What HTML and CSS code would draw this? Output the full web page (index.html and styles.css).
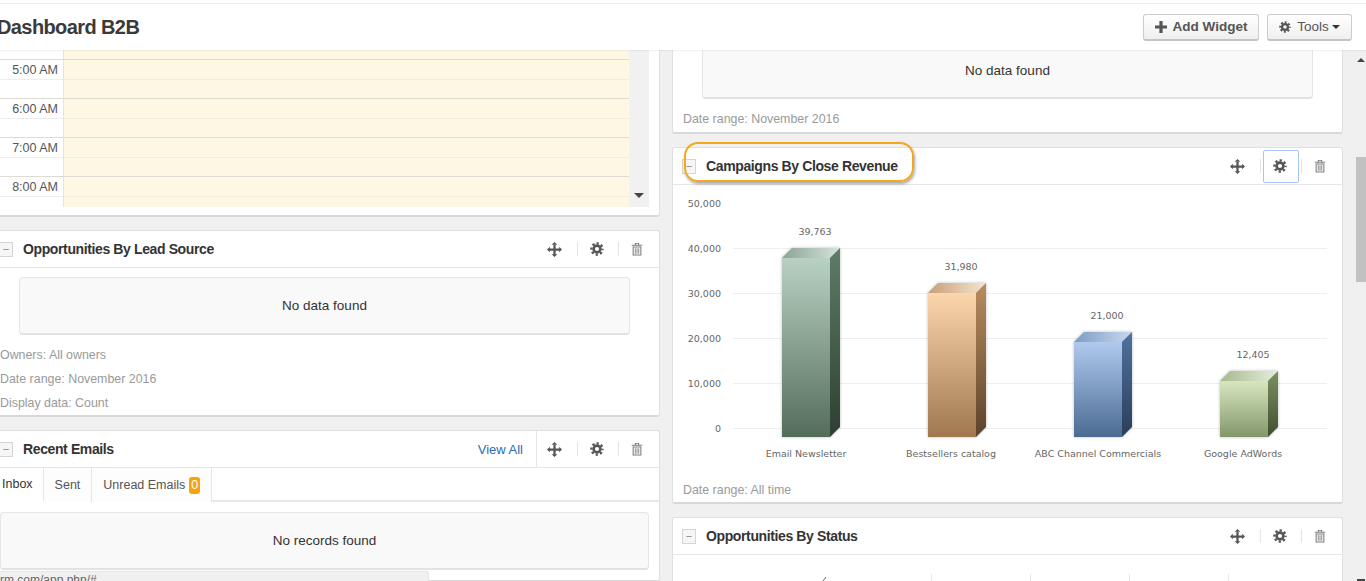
FILE: index.html
```html
<!DOCTYPE html>
<html lang="en">
<head>
    <meta charset="UTF-8">
    <meta name="viewport" content="width=device-width, initial-scale=1.0">
    <title>Dashboard B2B</title>
    <link rel="stylesheet" href="styles.css">
</head>
<body>

    <!-- shared icons -->
    <svg class="icon-sprite" xmlns="http://www.w3.org/2000/svg">
        <symbol id="i-move" viewBox="0 0 16 16">
            <path d="M6.8 3h2.4v3.8H13V5l3 3-3 3V9.2H9.2V13H11l-3 3-3-3h1.8V9.2H3V11L0 8l3-3v1.8h3.8z"/>
            <path d="M8 0l3 3H5z"/>
        </symbol>
        <symbol id="i-gear" viewBox="0 0 16 16">
            <circle cx="8" cy="8" r="3.9" fill="none" stroke="currentColor" stroke-width="3"/>
            <circle cx="8" cy="8" r="6.4" fill="none" stroke="currentColor" stroke-width="2.6" stroke-dasharray="2.6 2.43" stroke-dashoffset="1.3"/>
        </symbol>
        <symbol id="i-trash" viewBox="0 0 16 16">
            <path d="M2 3h12v1.3H2zM5.5 3V1h5v2h-1.2V2.1H6.7V3z"/>
            <path d="M3 5h10v10.5H3zm1.2 1.2v8.1h7.6V6.2z"/>
            <path d="M5.5 7h1v6.5h-1zM7.5 7h1v6.5h-1zM9.5 7h1v6.5h-1z"/>
        </symbol>
        <symbol id="i-plus" viewBox="0 0 12 12">
            <path d="M4.4 0h3.2v4.4H12v3.2H7.6V12H4.4V7.6H0V4.4h4.4z"/>
        </symbol>
    </svg>

    <header class="topbar">
        <h1 class="page-title">Dashboard B2B</h1>
        <div class="topbar-actions">
            <button class="btn btn-add"><svg class="btn-icon"><use href="#i-plus"/></svg>Add Widget</button>
            <button class="btn btn-tools"><svg class="btn-icon"><use href="#i-gear"/></svg>Tools<span class="caret"></span></button>
        </div>
    </header>

    <main class="board">
        <div class="column">
            <!-- calendar widget, scrolled under the top bar -->
            <section class="panel panel-calendar">
                <div class="calendar">
                    <div class="cal-rows">
                        <div class="cal-row cal-row-head"><div class="cal-time"></div><div class="cal-slot"></div></div>
                        <div class="cal-row"><div class="cal-time">5:00 AM</div><div class="cal-slot"></div></div>
                        <div class="cal-row"><div class="cal-time">6:00 AM</div><div class="cal-slot"></div></div>
                        <div class="cal-row"><div class="cal-time">7:00 AM</div><div class="cal-slot"></div></div>
                        <div class="cal-row cal-row-last"><div class="cal-time">8:00 AM</div><div class="cal-slot"></div></div>
                    </div>
                    <div class="cal-scroll"><span class="arrow-down"></span></div>
                </div>
            </section>

            <section class="panel">
                <div class="panel-head">
                    <span class="collapse">&minus;</span>
                    <h3 class="panel-title">Opportunities By Lead Source</h3>
                    <div class="actions">
                        <span class="action action-move"><svg class="icon"><use href="#i-move"/></svg></span>
                        <i class="sep"></i>
                        <span class="action action-gear"><svg class="icon icon-small"><use href="#i-gear"/></svg></span>
                        <i class="sep"></i>
                        <span class="action action-trash"><svg class="icon icon-small"><use href="#i-trash"/></svg></span>
                    </div>
                </div>
                <div class="empty empty-wide empty-lead">No data found</div>
                <div class="meta meta-lead">
                    <p>Owners: All owners</p>
                    <p>Date range: November 2016</p>
                    <p>Display data: Count</p>
                </div>
            </section>

            <section class="panel panel-emails">
                <div class="panel-head">
                    <span class="collapse">&minus;</span>
                    <h3 class="panel-title">Recent Emails</h3>
                    <div class="actions">
                        <a class="view-all" href="#">View All</a>
                        <i class="sep sep-tall"></i>
                        <span class="action action-move"><svg class="icon"><use href="#i-move"/></svg></span>
                        <i class="sep"></i>
                        <span class="action action-gear"><svg class="icon icon-small"><use href="#i-gear"/></svg></span>
                        <i class="sep"></i>
                        <span class="action action-trash"><svg class="icon icon-small"><use href="#i-trash"/></svg></span>
                    </div>
                </div>
                <div class="tabs">
                    <span class="tab tab-active">Inbox</span>
                    <span class="tab">Sent</span>
                    <span class="tab tab-unread">Unread Emails<span class="badge">0</span></span>
                </div>
                <div class="empty empty-records">No records found</div>
            </section>
        </div>

        <div class="column">
            <section class="panel panel-clipped">
                <div class="empty empty-wide empty-top">No data found</div>
                <div class="meta"><p>Date range: November 2016</p></div>
            </section>

            <section class="panel">
                <div class="highlight"></div>
                <div class="panel-head">
                    <span class="collapse">&minus;</span>
                    <h3 class="panel-title">Campaigns By Close Revenue</h3>
                    <div class="actions">
                        <span class="action action-move"><svg class="icon"><use href="#i-move"/></svg></span>
                        <i class="sep"></i>
                        <span class="action action-gear action-focus"><svg class="icon icon-small"><use href="#i-gear"/></svg></span>
                        <i class="sep"></i>
                        <span class="action action-trash"><svg class="icon icon-small"><use href="#i-trash"/></svg></span>
                    </div>
                </div>

                <svg class="chart" viewBox="673 185 668 293" xmlns="http://www.w3.org/2000/svg">
                    <defs>
                        <linearGradient id="g-front" x1="0" y1="0" x2="0" y2="1"><stop offset="0" stop-color="#b9d1c2"/><stop offset="1" stop-color="#546d5b"/></linearGradient>
                        <linearGradient id="g-side" x1="0" y1="0" x2="0" y2="1"><stop offset="0" stop-color="#5e7c68"/><stop offset="1" stop-color="#2d3f32"/></linearGradient>
                        <linearGradient id="g-top" x1="0" y1="0" x2="1" y2="0"><stop offset="0" stop-color="#8aa595"/><stop offset="1" stop-color="#d6e2dc"/></linearGradient>
                        <linearGradient id="o-front" x1="0" y1="0" x2="0" y2="1"><stop offset="0" stop-color="#fcd6ac"/><stop offset="1" stop-color="#a07850"/></linearGradient>
                        <linearGradient id="o-side" x1="0" y1="0" x2="0" y2="1"><stop offset="0" stop-color="#b88c5e"/><stop offset="1" stop-color="#5c422b"/></linearGradient>
                        <linearGradient id="o-top" x1="0" y1="0" x2="1" y2="0"><stop offset="0" stop-color="#c89e76"/><stop offset="1" stop-color="#f7e4d2"/></linearGradient>
                        <linearGradient id="b-front" x1="0" y1="0" x2="0" y2="1"><stop offset="0" stop-color="#b0caee"/><stop offset="1" stop-color="#4b6b93"/></linearGradient>
                        <linearGradient id="b-side" x1="0" y1="0" x2="0" y2="1"><stop offset="0" stop-color="#4f72a0"/><stop offset="1" stop-color="#293e5a"/></linearGradient>
                        <linearGradient id="b-top" x1="0" y1="0" x2="1" y2="0"><stop offset="0" stop-color="#7d9cc6"/><stop offset="1" stop-color="#c8d8ec"/></linearGradient>
                        <linearGradient id="l-front" x1="0" y1="0" x2="0" y2="1"><stop offset="0" stop-color="#d8e6bf"/><stop offset="1" stop-color="#83976b"/></linearGradient>
                        <linearGradient id="l-side" x1="0" y1="0" x2="0" y2="1"><stop offset="0" stop-color="#7c9262"/><stop offset="1" stop-color="#404e2f"/></linearGradient>
                        <linearGradient id="l-top" x1="0" y1="0" x2="1" y2="0"><stop offset="0" stop-color="#a5b88d"/><stop offset="1" stop-color="#e5eed9"/></linearGradient>
                    </defs>

                    <g class="grid">
                        <path d="M733 248.5H1327M733 293.5H1327M733 338.5H1327M733 383.5H1327M733 428.5H1327"/>
                    </g>

                    <g class="axis-y">
                        <text x="721" y="207">50,000</text>
                        <text x="721" y="252">40,000</text>
                        <text x="721" y="297">30,000</text>
                        <text x="721" y="342">20,000</text>
                        <text x="721" y="387">10,000</text>
                        <text x="721" y="432">0</text>
                    </g>

                    <g class="bar">
                        <polygon fill="url(#g-top)" points="782,258 792,248 840,248 830,258"/>
                        <polygon fill="url(#g-side)" points="830,258 840,248 840,427 830,437"/>
                        <rect fill="url(#g-front)" x="782" y="258" width="48" height="179"/>
                    </g>
                    <g class="bar">
                        <polygon fill="url(#o-top)" points="928,293 938,283 986,283 976,293"/>
                        <polygon fill="url(#o-side)" points="976,293 986,283 986,427 976,437"/>
                        <rect fill="url(#o-front)" x="928" y="293" width="48" height="144"/>
                    </g>
                    <g class="bar">
                        <polygon fill="url(#b-top)" points="1074,342 1084,332 1132,332 1122,342"/>
                        <polygon fill="url(#b-side)" points="1122,342 1132,332 1132,427 1122,437"/>
                        <rect fill="url(#b-front)" x="1074" y="342" width="48" height="95"/>
                    </g>
                    <g class="bar">
                        <polygon fill="url(#l-top)" points="1220,381 1230,371 1278,371 1268,381"/>
                        <polygon fill="url(#l-side)" points="1268,381 1278,371 1278,427 1268,437"/>
                        <rect fill="url(#l-front)" x="1220" y="381" width="48" height="56"/>
                    </g>

                    <g class="values">
                        <text x="815" y="235">39,763</text>
                        <text x="961" y="270">31,980</text>
                        <text x="1107" y="319">21,000</text>
                        <text x="1253" y="358">12,405</text>
                    </g>
                    <g class="axis-x">
                        <text x="806" y="457">Email Newsletter</text>
                        <text x="951" y="457">Bestsellers catalog</text>
                        <text x="1098" y="457">ABC Channel Commercials</text>
                        <text x="1243" y="457">Google AdWords</text>
                    </g>
                </svg>

                <div class="meta meta-chart"><p>Date range: All time</p></div>
            </section>

            <section class="panel panel-status">
                <div class="panel-head">
                    <span class="collapse">&minus;</span>
                    <h3 class="panel-title">Opportunities By Status</h3>
                    <div class="actions">
                        <span class="action action-move"><svg class="icon"><use href="#i-move"/></svg></span>
                        <i class="sep"></i>
                        <span class="action action-gear"><svg class="icon icon-small"><use href="#i-gear"/></svg></span>
                        <i class="sep"></i>
                        <span class="action action-trash"><svg class="icon icon-small"><use href="#i-trash"/></svg></span>
                    </div>
                </div>
                <svg class="chart-stub" viewBox="673 555 668 30" xmlns="http://www.w3.org/2000/svg">
                    <path class="stub-grid" d="M931.5 574V585M1030.5 574V585M1129.5 574V585M1228.5 574V585"/>
                    <path class="stub-tick" d="M823 581L826 577"/>
                </svg>
            </section>
        </div>

        <aside class="page-scroll">
            <span class="arrow-up"></span>
            <div class="page-thumb"></div>
            <span class="arrow-bottom"></span>
        </aside>
    </main>

    <div class="status-link">rm.com/app.php/#</div>

</body>
</html>
```

FILE: styles.css
```css
/* Page frame */
* {
    box-sizing: border-box;
}

html, body {
    height: 100%;
}

body {
    font-family: "Liberation Sans", Arial, sans-serif;
    font-size: 12.5px;
    color: #333;
    background-color: #f0f0f0;
    margin: 0;
    overflow: hidden;
    position: relative;
}

p, h1, h3 {
    margin: 0;
}

.icon-sprite {
    display: none;
}

/* Top bar */
.topbar {
    display: flex;
    align-items: center;
    justify-content: space-between;
    height: 50px;
    padding: 4px 14px 0 0;
    background: linear-gradient(#eee, #eee) 0 3px / 100% 1px no-repeat #fff;
    box-shadow: 0 1px 1px rgba(0, 0, 0, 0.05);
    position: relative;
    z-index: 2;
}

.page-title {
    font-size: 20px;
    font-weight: bold;
    letter-spacing: -0.6px;
    color: #3a3a3a;
    margin-left: -3px;
}

.topbar-actions {
    display: flex;
    gap: 8px;
}

.btn {
    display: flex;
    align-items: center;
    justify-content: center;
    height: 27px;
    font-family: inherit;
    color: #555;
    background: linear-gradient(#fff, #efefef);
    border: 1px solid #ccc;
    border-bottom: 2px solid #c4c4c4;
    border-radius: 3px;
    padding: 0;
}

.btn-add {
    width: 116px;
    font-size: 13.5px;
    font-weight: bold;
}

.btn-tools {
    width: 85px;
    font-size: 13.5px;
}

.btn-icon {
    width: 12px;
    height: 12px;
    fill: #555;
    color: #555;
    margin-right: 6px;
}

.caret {
    width: 0;
    height: 0;
    border-left: 4px solid transparent;
    border-right: 4px solid transparent;
    border-top: 4px solid #333;
    margin-left: 3px;
}

/* Columns */
.board {
    display: flex;
    gap: 12px;
    height: 531px;
    margin-left: -11px;
    overflow: hidden;
}

.column {
    display: flex;
    flex-direction: column;
    gap: 13px;
    flex: 0 0 671px;
}

/* Widgets */
.panel {
    flex: none;
    position: relative;
    background-color: #fff;
    border: 1px solid #e0e0e0;
    border-bottom: 2px solid #d8d8d8;
    border-radius: 3px;
}

.panel-calendar,
.panel-clipped {
    border-top: none;
    border-radius: 0 0 3px 3px;
}

.panel-calendar {
    padding: 0 10px 8px;
}

.panel-head {
    display: flex;
    align-items: center;
    height: 37px;
    padding-left: 9px;
    border-bottom: 1px solid #e6e6e6;
}

.collapse {
    flex: none;
    width: 14px;
    height: 15px;
    line-height: 12px;
    text-align: center;
    font-size: 11px;
    color: #888;
    background-color: #f6f6f6;
    border: 1px solid #d5d5d5;
    margin-right: 10px;
}

.panel-title {
    font-size: 14px;
    font-weight: bold;
    letter-spacing: -0.38px;
    color: #333;
}

.actions {
    display: flex;
    align-items: center;
    margin-left: auto;
    height: 100%;
}

.action {
    display: flex;
    align-items: center;
    justify-content: center;
    width: 40px;
    height: 33px;
    color: #555;
    fill: #555;
}

.action-move {
    padding-right: 5px;
}

.action-gear {
    padding-right: 2px;
}

.action-trash {
    padding-right: 4px;
    color: #7c7c7c;
    fill: #7c7c7c;
}

/* the gear that has keyboard focus */
.action-focus {
    width: 36px;
    margin: 0 2px;
    border: 1px solid #a3c6f2;
    border-radius: 2px;
}

.icon {
    width: 15px;
    height: 15px;
}

.icon-small {
    width: 14px;
    height: 14px;
}

.sep {
    width: 1px;
    height: 14px;
    background-color: #e4e4e4;
}

.sep-tall {
    height: 100%;
}

.view-all {
    font-size: 13px;
    color: #2a6db5;
    text-decoration: none;
    margin-right: 13px;
}

/* Empty boxes */
.empty {
    display: flex;
    align-items: center;
    justify-content: center;
    height: 58px;
    font-size: 13.5px;
    color: #333;
    background-color: #f9f9f9;
    border: 1px solid #e6e6e6;
    border-bottom: 2px solid #e2e2e2;
    border-radius: 4px;
}

.empty-wide {
    margin: 0 29px;
}

.empty-lead {
    margin-top: 9px;
}

.empty-top {
    height: 49px;
    padding-bottom: 7px;
    border-top: none;
    border-radius: 0 0 4px 4px;
}

.empty-records {
    margin: 10px 10px 10px;
}

/* Footnotes under a widget */
.meta {
    font-size: 12.4px;
    line-height: 24px;
    color: #9a9a9a;
    padding: 8px 10px 1px;
}

.meta-lead {
    padding: 8px 10px 0;
}

.meta-chart {
    padding: 0 10px;
}

/* Calendar */
.calendar {
    display: flex;
    height: 157px;
    overflow: hidden;
}

.cal-rows {
    flex: 1;
}

.cal-row {
    display: flex;
    height: 39px;
    border-top: 1px solid #dedcd0;
}

.cal-row-head {
    height: 9px;
    border-top: none;
}

.cal-row-last {
    height: 31px;
}

.cal-time {
    flex: 0 0 64px;
    line-height: 20px;
    text-align: right;
    padding-right: 5px;
    color: #555;
    background: linear-gradient(#eee, #eee) 0 19px / 100% 1px no-repeat #fff;
    border-right: 1px solid #e4e4e4;
}

.cal-row-head .cal-time {
    background: #fff;
}

.cal-slot {
    flex: 1;
    background: linear-gradient(#f2edd8, #f2edd8) 0 19px / 100% 1px no-repeat #fdf7e3;
}

.cal-row-head .cal-slot {
    background: #fdf7e3;
}

.cal-scroll {
    display: flex;
    flex: 0 0 20px;
    align-items: flex-end;
    justify-content: center;
    padding-bottom: 9px;
    background-color: #f1f1f1;
}

.arrow-down {
    width: 0;
    height: 0;
    border-left: 5px solid transparent;
    border-right: 5px solid transparent;
    border-top: 5px solid #444;
}

/* Tabs */
.tabs {
    display: flex;
    height: 34px;
    border-bottom: 2px solid #e8e8e8;
}

.tab {
    display: flex;
    align-items: center;
    height: 34px;
    padding: 0 11px;
    color: #555;
    background-color: #fdfdfd;
    border-right: 1px solid #e6e6e6;
}

.tab-active {
    padding: 0 10px 0 12px;
    color: #333;
    background-color: #fff;
    border-bottom: 2px solid #fff;
}

.tab-unread {
    padding-right: 11px;
}

.badge {
    width: 11px;
    height: 17px;
    line-height: 17px;
    text-align: center;
    color: #fff;
    background-color: #f5a30f;
    border-radius: 3px;
    margin-left: 4px;
}

/* Bar chart */
.chart {
    display: block;
    width: 668px;
    height: 293px;
}

.grid path {
    stroke: #eeeeee;
    stroke-width: 1;
    fill: none;
}

.axis-y text,
.values text,
.axis-x text {
    font-family: "DejaVu Sans", Verdana, sans-serif;
    font-size: 9.5px;
    fill: #666;
}

.axis-y text {
    text-anchor: end;
}

.values text,
.axis-x text {
    text-anchor: middle;
}

.bar {
    filter: drop-shadow(0 0 1.5px rgba(0, 0, 0, 0.28));
}

.chart-stub {
    display: block;
    width: 668px;
    height: 30px;
}

.stub-grid {
    stroke: #e8e8e8;
    fill: none;
}

.stub-tick {
    stroke: #666;
    fill: none;
}

/* Annotation ring drawn over the campaign widget */
.highlight {
    position: absolute;
    left: 11px;
    top: -6px;
    width: 230px;
    height: 40px;
    border: 2px solid #f3a81e;
    border-radius: 14px;
    box-shadow: 1px 2px 3px rgba(0, 0, 0, 0.35);
    z-index: 1;
    pointer-events: none;
}

/* Page scrollbar */
.page-scroll {
    display: flex;
    flex-direction: column;
    flex: 0 0 10px;
    margin-left: auto;
    align-items: flex-start;
    padding-top: 8px;
}

.arrow-up {
    width: 0;
    height: 0;
    margin-left: 1px;
    border-left: 4px solid transparent;
    border-right: 4px solid transparent;
    border-bottom: 4px solid #444;
}

.page-thumb {
    width: 10px;
    height: 125px;
    margin-top: 95px;
    background-color: #c1c1c1;
}

.arrow-bottom {
    width: 8px;
    height: 2px;
    margin: 297px 0 0 1px;
    background-color: #444;
}

/* Browser link preview at the bottom */
.status-link {
    position: absolute;
    left: 0;
    bottom: 0;
    width: 429px;
    height: 10px;
    overflow: hidden;
    font-size: 12px;
    line-height: 14px;
    color: #666;
    background-color: #f0f0f0;
    border-top: 1px solid #e4e4e4;
    border-right: 1px solid #e4e4e4;
    border-radius: 0 3px 0 0;
    padding-top: 1px;
    z-index: 3;
}
```
